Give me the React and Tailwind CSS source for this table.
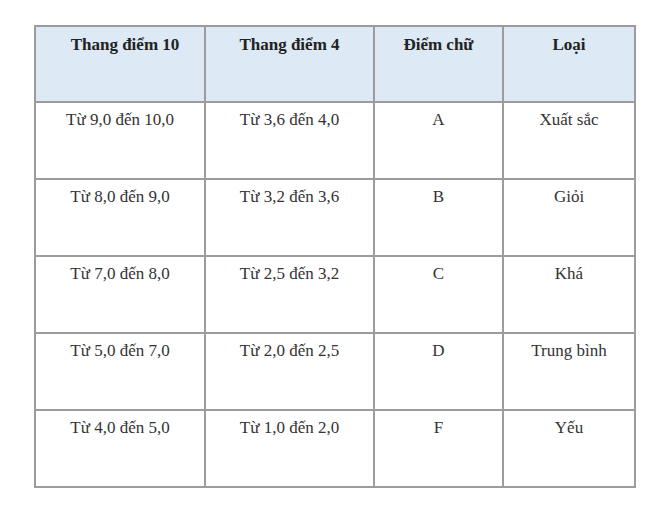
const header = ['Thang điểm 10', 'Thang điểm 4', 'Điểm chữ', 'Loại'];

const rows = [
  ['Từ 9,0 đến 10,0', 'Từ 3,6 đến 4,0', 'A', 'Xuất sắc'],
  ['Từ 8,0 đến 9,0', 'Từ 3,2 đến 3,6', 'B', 'Giỏi'],
  ['Từ 7,0 đến 8,0', 'Từ 2,5 đến 3,2', 'C', 'Khá'],
  ['Từ 5,0 đến 7,0', 'Từ 2,0 đến 2,5', 'D', 'Trung bình'],
  ['Từ 4,0 đến 5,0', 'Từ 1,0 đến 2,0', 'F', 'Yếu'],
];

export default function App() {
  return (
    <div className="w-[671px] h-[513px] bg-white pt-[25px] pl-[34px] font-['Liberation_Serif','Times_New_Roman',serif] text-[17px] leading-6 text-[#333]">
      <div className="grid grid-cols-[170px_169px_129px_132px] w-[602px] border-l-2 border-t-2 border-[#9c9c9c]">
        {header.map((h, i) => (
          <div
            key={h}
            className={
              'h-[76px] bg-[#dde9f5] border-r-2 border-b-2 border-[#9c9c9c] pt-[6px] text-center font-bold text-[#222]' +
              (i === 0 ? ' pl-[10px]' : '')
            }
          >
            {h}
          </div>
        ))}
        {rows.map((row, i) =>
          row.map((cell, j) => (
            <div
              key={i + '-' + j}
              className="h-[77px] border-r-2 border-b-2 border-[#9c9c9c] pt-[5px] text-center"
            >
              {cell}
            </div>
          ))
        )}
      </div>
    </div>
  );
}
